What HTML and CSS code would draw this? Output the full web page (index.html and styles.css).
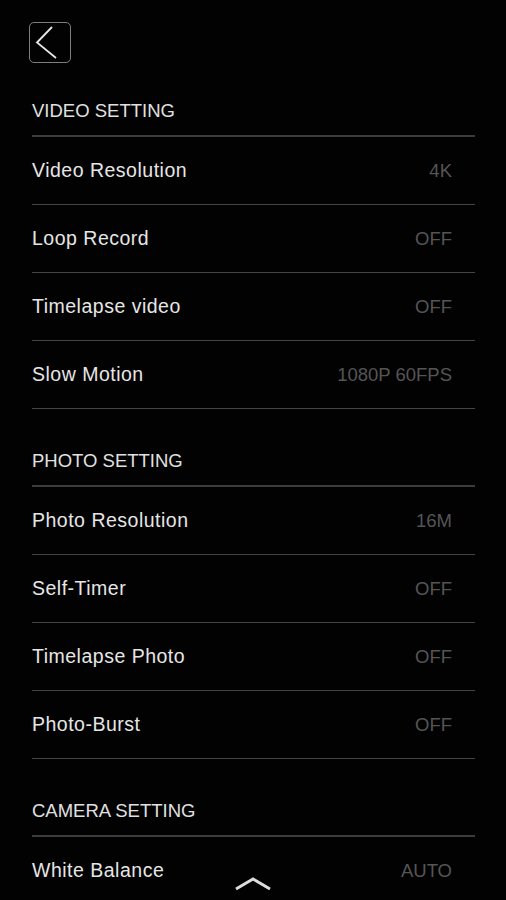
FILE: index.html
```html
<!DOCTYPE html>
<html lang="en">
<head>
  <meta charset="UTF-8" />
  <title>Settings</title>
  <link rel="stylesheet" href="styles.css">
</head>
<body>

  <div class="topbar">
    <div class="back-btn">
      <svg width="42" height="41" viewBox="0 0 42 41">
        <path d="M23 5 L8 20.5 L27 36" fill="none" stroke="#e6e6e6" stroke-width="1.8" />
      </svg>
    </div>
  </div>

  <div class="settings">
    <div class="section-title">VIDEO SETTING</div>
    <div class="row"><span class="label">Video Resolution</span><span class="value">4K</span></div>
    <div class="row"><span class="label">Loop Record</span><span class="value">OFF</span></div>
    <div class="row"><span class="label">Timelapse video</span><span class="value">OFF</span></div>
    <div class="row"><span class="label">Slow Motion</span><span class="value">1080P 60FPS</span></div>

    <div class="section-title">PHOTO SETTING</div>
    <div class="row"><span class="label">Photo Resolution</span><span class="value">16M</span></div>
    <div class="row"><span class="label">Self-Timer</span><span class="value">OFF</span></div>
    <div class="row"><span class="label">Timelapse Photo</span><span class="value">OFF</span></div>
    <div class="row"><span class="label">Photo-Burst</span><span class="value">OFF</span></div>

    <div class="section-title">CAMERA SETTING</div>
    <div class="row"><span class="label">White Balance</span><span class="value">AUTO</span></div>
  </div>

  <!-- scroll up hint, sits over the list -->
  <div class="scroll-up">
    <svg width="40" height="16" viewBox="0 0 40 16">
      <path d="M3 13 L20 3 L37 13" fill="none" stroke="#dcdcdc" stroke-width="3" />
    </svg>
  </div>

</body>
</html>
```

FILE: styles.css
```css
html, body {
  margin: 0;
  padding: 0;
  background: #020202;
  height: 900px;
  overflow: hidden;
}
body {
  font-family: "Liberation Sans", Arial, sans-serif;
  color: #e6e6e6;
}
.topbar {
  height: 59px;
  padding: 22px 0 0 29px;
  box-sizing: border-box;
}
.back-btn {
  width: 42px;
  height: 41px;
  box-sizing: border-box;
  border: 1.5px solid #7e7e7e;
  border-radius: 5px;
  display: flex;
  align-items: center;
  justify-content: center;
}
.back-btn svg {
  display: block;
  flex-shrink: 0;
}
.settings {
  margin: 0 31px 0 32px;
}
.section-title {
  height: 78px;
  box-sizing: border-box;
  display: flex;
  align-items: flex-end;
  padding-bottom: 12px;
  line-height: 24px;
  font-size: 18.5px;
  color: #e0e0e0;
  border-bottom: 2px solid #3c3c3c;
}
.row {
  height: 68px;
  box-sizing: border-box;
  display: flex;
  align-items: center;
  justify-content: space-between;
  border-bottom: 1px solid #444;
}
.label {
  font-size: 19.5px;
  letter-spacing: 0.5px;
  color: #e6e6e6;
}
.value {
  font-size: 18.5px;
  color: #555;
  padding-right: 23px;
}
.scroll-up {
  position: fixed;
  left: 0;
  right: 0;
  bottom: 8px;
  display: flex;
  justify-content: center;
}
.scroll-up svg {
  display: block;
}
```
